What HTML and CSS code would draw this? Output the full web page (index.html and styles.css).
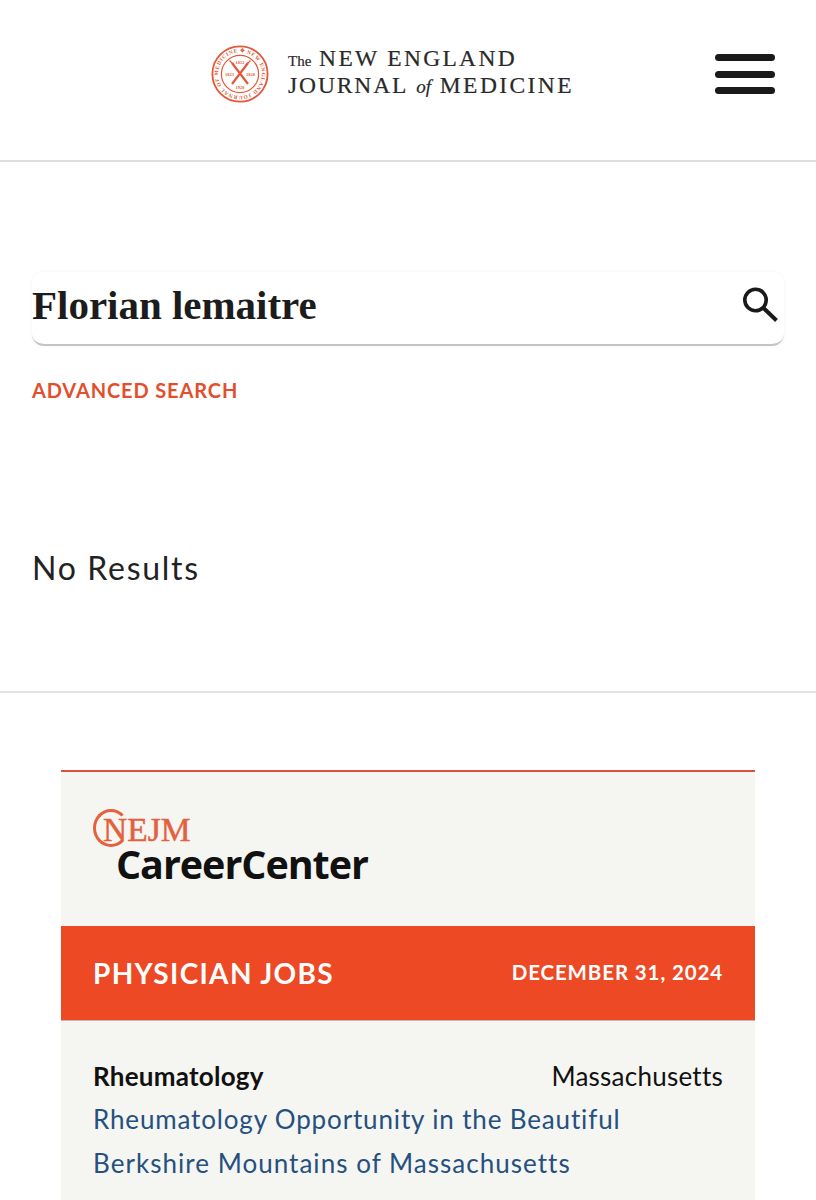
FILE: index.html
```html
<!DOCTYPE html>
<html lang="en">
<head>
<meta charset="utf-8">
<title>NEJM search</title>
<link rel="stylesheet" href="styles.css">
</head>
<body>
<header class="site-header">
  <div class="brand">
    <svg class="seal" viewBox="0 0 58 58" width="58" height="58">
      <defs>
        <path id="seal-ring" d="M29 7.2 a21.8 21.8 0 1 1 -0.01 0"/>
      </defs>
      <circle cx="29" cy="29" r="27.6" fill="#fff" stroke="#e2593a" stroke-width="1.8"/>
      <circle cx="29" cy="29" r="18.6" fill="#fff" stroke="#e2593a" stroke-width="1.2"/>
      <text class="seal-ring"><textPath href="#seal-ring" textLength="134" lengthAdjust="spacing">✥ NEW ENGLAND JOURNAL OF MEDICINE</textPath></text>
      <path d="M21 18 L37 39 M37 18 L21 39" stroke="#e2593a" stroke-width="2.2" fill="none"/>
      <path d="M35 20 L39.5 15.5 M23 20 L18.5 15.5" stroke="#e2593a" stroke-width="1.2" fill="none"/>
      <text class="seal-year" x="29" y="19" text-anchor="middle">1812</text>
      <text class="seal-year" x="18.5" y="31" text-anchor="middle">1823</text>
      <text class="seal-year" x="39.5" y="31" text-anchor="middle">1828</text>
      <text class="seal-year" x="29" y="44" text-anchor="middle">1928</text>
    </svg>
    <div class="wordmark">
      <div class="wordmark-line"><span class="the">The</span> <span class="wide-a">NEW ENGLAND</span></div>
      <div class="wordmark-line">JOURNAL <i class="of">of</i> <span class="wide-b">MEDICINE</span></div>
    </div>
  </div>
  <div class="menu" aria-label="Menu"><span></span><span></span><span></span></div>
</header>

<section class="search">
  <div class="search-box">
    <span class="query">Florian lemaitre</span>
    <svg class="search-icon" viewBox="0 0 36 36" width="36" height="36">
      <circle cx="13.5" cy="13" r="10.7" fill="none" stroke="#1a1a1a" stroke-width="3.6"/>
      <path d="M21.5 21 L34.5 33.5" stroke="#1a1a1a" stroke-width="4" fill="none"/>
    </svg>
  </div>
  <a class="advanced">ADVANCED SEARCH</a>
  <p class="no-results">No Results</p>
</section>

<section class="jobs-wrap">
  <div class="jobs">
    <div class="jobs-logo">
      <div class="nejm"><span class="nejm-ring"></span><span class="nejm-text">NEJM</span></div>
      <div class="career">CareerCenter</div>
    </div>
    <div class="jobs-banner">
      <span class="banner-title">PHYSICIAN JOBS</span>
      <span class="banner-date">DECEMBER 31, 2024</span>
    </div>
    <div class="job">
      <div class="job-head"><b>Rheumatology</b><span>Massachusetts</span></div>
      <a class="job-link"><span class="job-line-a">Rheumatology Opportunity in the Beautiful</span> <span class="job-line-b">Berkshire Mountains of Massachusetts</span></a>
    </div>
  </div>
</section>
</body>
</html>
```
FILE: styles.css
```css
* { box-sizing: border-box; }
html, body { margin: 0; padding: 0; }
body {
  background: #fff;
  font-family: Lato, "Liberation Sans", sans-serif;
  color: #1a1a1a;
  height: 1200px;
  overflow: hidden;
}
.site-header {
  height: 162px;
  border-bottom: 2px solid #dedede;
  display: flex;
  align-items: flex-start;
  padding: 45px 41px 0 211px;
  justify-content: space-between;
}
.brand { display: flex; align-items: center; gap: 19px; }
.seal { display: block; }
.seal-ring { font: bold 5.4px "Liberation Serif", serif; fill: #e2593a; }
.seal-year { font: bold 4.4px "Liberation Serif", serif; fill: #e2593a; }
.wordmark {
  font-family: "Liberation Serif", serif;
  font-size: 23.5px;
  line-height: 24px;
  letter-spacing: 1.9px;
  color: #2a2a2a;
  -webkit-text-stroke: .2px #2a2a2a;
  white-space: nowrap;
  margin-top: -4px;
}
.wide-a { letter-spacing: 2.3px; }
.wide-b { letter-spacing: 2.4px; }
.the { font-size: 15px; letter-spacing: 0; }
.of { font-size: 19px; letter-spacing: 0; margin: 0 1px; }
.menu { display: flex; flex-direction: column; gap: 9.5px; padding-top: 9px; }
.menu span { display: block; width: 60px; height: 7px; border-radius: 3.5px; background: #1a1a1a; }

.search { padding: 110px 32px 0; height: 531px; border-bottom: 2px solid #e2e2e2; }
.search-box {
  height: 74px;
  border-radius: 12px;
  border-bottom: 2px solid #c4c4c4;
  box-shadow: 0 0 4px rgba(0,0,0,.05);
  display: flex;
  align-items: center;
  justify-content: space-between;
  padding: 0 6px 0 0;
}
.query {
  font-family: "Liberation Serif", serif;
  font-weight: 700;
  font-size: 41px;
  line-height: 46px;
  color: #1c1c1c;
  letter-spacing: -.02px;
  margin-top: -7px;
}
.search-icon { display: block; margin-top: -6px; }
.advanced {
  display: block;
  margin-top: 32px;
  color: #e1502c;
  font-weight: 700;
  font-size: 20px;
  line-height: 24px;
  letter-spacing: .87px;
}
.no-results {
  margin: 146px 0 0;
  font-size: 32px;
  line-height: 40px;
  letter-spacing: 1.7px;
  color: #222;
}

.jobs-wrap { padding: 77px 61px 0; }
.jobs { background: #f5f5f2; border-top: 2px solid #d9533b; height: 430px; }
.jobs-logo { height: 154px; padding: 36px 0 0 32px; }
.nejm { display: flex; align-items: center; height: 40px; }
.nejm-ring {
  display: block;
  width: 36px;
  height: 38px;
  border: 3.5px solid #e4613e;
  border-right-color: transparent;
  border-radius: 50%;
  flex: none;
}
.nejm-text {
  font-family: "Liberation Serif", serif;
  font-size: 33.5px;
  line-height: 40px;
  color: #e4613e;
  margin: 4px 0 0 -26px;
  -webkit-text-stroke: .5px #e4613e;
}
.career {
  font-family: "Open Sans", "Liberation Sans", sans-serif;
  font-weight: 700;
  font-size: 39.5px;
  line-height: 40px;
  letter-spacing: -1.05px;
  color: #111;
  margin: -4px 0 0 23px;
}
.jobs-banner {
  height: 95px;
  background: #ed4925;
  border-bottom: 1px solid #c9b8b0;
  color: #fff;
  display: flex;
  align-items: center;
  justify-content: space-between;
  padding: 0 32px;
  font-weight: 700;
}
.banner-title { font-size: 28px; letter-spacing: 1.33px; }
.banner-date { font-size: 20.5px; letter-spacing: .88px; margin-top: -2px; }
.job { padding: 34px 32px 0; font-size: 26px; line-height: 44px; }
.job-head { display: flex; justify-content: space-between; color: #111; line-height: 42px; }
.job-head span { letter-spacing: .25px; }
.job-head b { letter-spacing: .25px; }
.job-link { display: block; color: #25507f; }
.job-line-a { display: block; letter-spacing: .85px; }
.job-line-b { display: block; letter-spacing: 1.03px; }
```
